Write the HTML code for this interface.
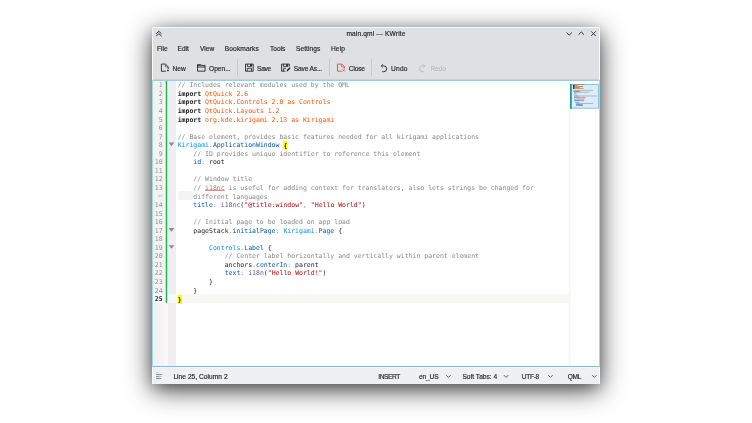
<!DOCTYPE html>
<html><head><meta charset="utf-8">
<style>
html,body{margin:0;padding:0;background:#fff;}
body{width:752px;height:423px;overflow:hidden;position:relative;font-family:"Liberation Sans",sans-serif;font-size:6.6px;color:#232629;}
#win{position:absolute;left:152px;top:27px;width:448px;height:357px;background:#dfe0e2;border-radius:2px 2px 0 0;
 box-shadow:0 6px 26px rgba(0,0,0,.74),0 3px 12px rgba(0,0,0,.18);will-change:transform;}
#hl{position:absolute;left:0;top:0;width:448px;height:53px;box-sizing:border-box;border:1px solid rgba(255,255,255,.8);border-bottom:none;border-radius:2px 2px 0 0;}
#hl2{position:absolute;left:0;top:340px;width:448px;height:17px;box-sizing:border-box;border:1px solid rgba(255,255,255,.7);border-top:none;border-bottom:none;}
#win .t{position:absolute;white-space:pre;line-height:10px;height:10px;-webkit-text-stroke:0.16px #232629;}
#title{left:0;width:448px;text-align:center;top:1.9px;letter-spacing:0.15px;}
.sep{position:absolute;width:1px;background:#c6c8ca;top:32px;height:17px;}
#ed{position:absolute;left:0;top:53px;width:448px;height:287px;background:#fff;overflow:hidden;}
.bt{position:absolute;left:0;top:0;width:448px;height:1px;background:#92cff3;}
.bb{position:absolute;left:0;top:286px;width:448px;height:1px;background:#72c1ec;}
.bl{position:absolute;left:0;top:0;width:1px;height:287px;background:#9bdcfa;}
.br{position:absolute;left:447px;top:0;width:1px;height:287px;background:#9bdcfa;}
#status{position:absolute;left:0;top:340px;width:448px;height:17px;background:#eff0f1;box-shadow:inset 0 1px 0 #f7f4f3;}
#tbl{position:absolute;left:0;top:52px;width:448px;height:1px;background:#cbcdd0;}
#gut{position:absolute;left:1px;top:1px;width:11px;height:285px;background:#f3f3f3;}
#strip{position:absolute;left:12px;top:1px;width:4px;height:285px;background:#f9f5f8;}
#g1{position:absolute;left:13px;top:1px;width:1px;height:222px;background:#bfe6cc;}
#g2{position:absolute;left:15px;top:1px;width:1px;height:222px;background:#c9ead4;}
#grn{position:absolute;left:14px;top:1px;width:1px;height:222px;background:#16b650;}
#fold{position:absolute;left:16px;top:1px;width:8px;height:285px;background:#efefef;}
#code{position:absolute;left:25.7px;top:1.4px;font-family:"DejaVu Sans Mono","Liberation Mono",monospace;font-size:6.517px;line-height:8.55px;white-space:pre;color:#1f1c1b;}
#code div{height:8.55px;}
#nums{position:absolute;left:1px;top:1.4px;width:9.6px;text-align:right;font-family:"DejaVu Sans Mono","Liberation Mono",monospace;font-size:6.5px;line-height:8.55px;color:#909090;}
#nums div{height:8.55px;}
.c{color:#898887}.k{font-weight:bold}.o{color:#ff5500}.lb{color:#0095ff}.db{color:#0057ae}.p{color:#ca60ca}.v{color:#644a9b}.s{color:#bf0303}
.y{background:#ffff00;font-weight:bold;padding:0.5px 0}
#cur{position:absolute;left:24px;top:214.3px;width:393px;height:8.5px;background:#f8f7f6;}
#curg{position:absolute;left:1px;top:214.3px;width:11px;height:8.5px;background:#fbfbfb;}
#curf{position:absolute;left:16px;top:214.3px;width:8px;height:8.5px;background:#f8f8f8;}
#wrapind{position:absolute;left:26px;top:111px;width:14.7px;height:8.6px;background:#f4f4f4;}
#split{position:absolute;left:417px;top:1px;width:1px;height:285px;background:#f4f4f4;border-right:1px solid #fafafa;}
</style></head><body>
<div id="win">
 <div class="t" id="title">main.qml — KWrite</div>
 <svg style="position:absolute;left:0;top:0" width="448" height="20" viewBox="0 0 448 20" fill="none" stroke="#2c2f32" stroke-width="0.9">
  <path d="M4.1 6.8 L6.8 4.3 L9.5 6.8 M4.1 9.1 L6.8 6.6 L9.5 9.1" stroke-width="1"/>
  <path d="M414.5 5.6 L417.2 8.2 L419.9 5.6" stroke-width="1"/>
  <path d="M426.6 7.6 L429.3 5 L432 7.6" stroke-width="1"/>
  <path d="M439.1 4.3 L443.8 9 M443.8 4.3 L439.1 9"/>
 </svg>
 <div class="t" style="left:5px;top:17.3px">File</div>
 <div class="t" style="left:25.5px;top:17.3px">Edit</div>
 <div class="t" style="left:48px;top:17.3px">View</div>
 <div class="t" style="left:72.8px;top:17.3px;letter-spacing:0.13px">Bookmarks</div>
 <div class="t" style="left:118px;top:17.3px">Tools</div>
 <div class="t" style="left:144px;top:17.3px;letter-spacing:0.05px">Settings</div>
 <div class="t" style="left:179px;top:17.3px;letter-spacing:0.1px">Help</div>


 <svg style="position:absolute;left:0;top:30px" width="448" height="22" viewBox="0 30 448 22" fill="none" stroke="#232629" stroke-width="0.9" stroke-linejoin="miter">
  <!-- new: 160.9-168.6, 63.6-71.7 => win 8.9-16.6, 36.6-44.7 -->
  <path d="M9.4 37.05 H13.4 L16.2 39.8 V42.2 M13.8 44.25 H9.4 V37.05" stroke-width="0.9"/>
  <path d="M13.3 37.2 V39.9 H16" stroke-width="0.55"/>
  <path d="M15.9 42.6 V44.4 M14.9 43.5 H16.8" stroke-width="0.75"/>
  <!-- open: 197.1-205.5, 64.2-71.6 => win 45.1-53.5, 37.2-44.6 -->
  <path d="M45.55 38 V44.15 H53.05 V38.45 H49.5 M45.5 40 H53.1" stroke-width="0.9"/>
  <path d="M45.1 37.2 H48.7 L49.6 38.1 L49.6 38.8 H45.1 Z" fill="#232629" stroke="none"/>
  <!-- save: 245-253.7, 63.6-71.7 => win 93-101.7, 36.6-44.7 -->
  <path d="M93.5 37.1 H101.2 V44.2 H93.5 Z"/>
  <path d="M95.4 37.1 V39.6 H99.6 V37.1" stroke-width="0.8"/>
  <path d="M98 37.2 H99.5 V39.3 H98 Z" fill="#232629" stroke="none"/>
  <path d="M95.3 44.2 V41.4 H99.5 V44.2" stroke-width="0.8"/>
  <!-- save as: 281.1-290.3 => win 129.1-138.3 -->
  <path d="M137.3 39.6 V37.1 H129.6 V44.2 H133.4"/>
  <path d="M131.5 37.1 V39.6 H135.7 V37.1" stroke-width="0.8"/>
  <path d="M134.1 37.2 H135.6 V39.3 H134.1 Z" fill="#232629" stroke="none"/>
  <path d="M131.4 44.2 V41.4 H134" stroke-width="0.8"/>
  <path d="M134.6 44.4 L135 42.8 L137.6 40.2 L138.6 41.2 L136 43.9 Z" fill="#232629" stroke="none"/>
  <!-- close: 337-344.8, 63.6-71.7 => win 185-192.8 -->
  <g stroke="#da4453">
  <path d="M192.3 41.5 V39.6 L189.8 37.1 H185.5 V44.2 H189.6"/>
  <path d="M189.6 37.3 V39.8 H192.2" stroke-width="0.7"/>
  <path d="M190.5 42.2 L192.7 44.4 M192.7 42.2 L190.5 44.4" stroke-width="0.8"/>
  </g>
  <!-- undo: 380.3-387, 64.4-72 => win 228.3-235, 37.4-45 -->
  <path d="M229.6 38.9 H231.8 A2.9 2.9 0 0 1 231.8 44.7 H230.2" stroke-width="0.9"/>
  <path d="M230.9 37.3 L229.2 38.9 L230.9 40.5" stroke-width="0.8"/>
  <!-- redo: 419.2-425.9 => win 267.2-273.9 -->
  <g stroke="#b4b6b8">
  <path d="M272.6 38.9 H270.4 A2.9 2.9 0 0 0 270.4 44.7 H272" stroke-width="0.8"/>
  <path d="M271.3 37.3 L273 38.9 L271.3 40.5" stroke-width="0.7"/>
  </g>
 </svg>
 <div class="t" style="left:20.6px;top:36.7px">New</div>
 <div class="t" style="left:57px;top:36.7px">Open...</div>
 <div class="sep" style="left:85px"></div>
 <div class="t" style="left:105.1px;top:36.7px;letter-spacing:-0.28px">Save</div>
 <div class="t" style="left:141.7px;top:36.7px;letter-spacing:-0.13px">Save As...</div>
 <div class="sep" style="left:176.5px"></div>
 <div class="t" style="left:196.8px;top:36.7px;letter-spacing:-0.16px">Close</div>
 <div class="sep" style="left:219px"></div>
 <div class="t" style="left:239px;top:36.7px;letter-spacing:0.25px">Undo</div>
 <div class="t" style="left:278.4px;top:36.7px;color:#b0b2b4;-webkit-text-stroke:0;letter-spacing:-0.1px">Redo</div>

 <div id="tbl"></div>
 <div id="ed">
  <div id="gut"></div><div id="strip"></div><div id="g1"></div><div id="g2"></div><div id="grn"></div><div id="fold"></div>
  <div id="cur"></div><div id="curg"></div><div id="curf"></div><div id="wrapind"></div><div id="split"></div>
  <div id="nums"><div>1</div><div>2</div><div>3</div><div>4</div><div>5</div><div>6</div><div>7</div><div>8</div><div>9</div><div>10</div><div>11</div><div>12</div><div>13</div><div>&nbsp;</div><div>14</div><div>15</div><div>16</div><div>17</div><div>18</div><div>19</div><div>20</div><div>21</div><div>22</div><div>23</div><div>24</div><div style="color:#1f1c1b;font-weight:bold">25</div></div>
  <div id="code"><div><span class="c">// Includes relevant modules used by the QML</span></div
><div><span class="k">import</span> <span class="o">QtQuick 2.6</span></div
><div><span class="k">import</span> <span class="o">QtQuick.Controls 2.0 as Controls</span></div
><div><span class="k">import</span> <span class="o">QtQuick.Layouts 1.2</span></div
><div><span class="k">import</span> <span class="o">org.kde.kirigami 2.13 as Kirigami</span></div
><div> </div
><div><span class="c">// Base element, provides basic features needed for all kirigami applications</span></div
><div><span class="lb">Kirigami</span><span class="p">.</span><span class="db">ApplicationWindow</span> <span class="y">{</span></div
><div>    <span class="c">// ID provides unique identifier to reference this element</span></div
><div>    <span class="db">id</span><span class="p">:</span> root</div
><div> </div
><div>    <span class="c">// Window title</span></div
><div>    <span class="c">// i18nc is useful for adding context for translators, also lets strings be changed for</span></div
><div>    <span class="c">different languages</span></div
><div>    <span class="db">title</span><span class="p">:</span> <span class="v">i18nc</span>(<span class="s">"@title:window"</span><span class="p">,</span> <span class="s">"Hello World"</span>)</div
><div> </div
><div>    <span class="c">// Initial page to be loaded on app load</span></div
><div>    pageStack<span class="p">.</span><span class="db">initialPage</span><span class="p">:</span> <span class="lb">Kirigami</span><span class="p">.</span><span class="db">Page</span> {</div
><div> </div
><div>        <span class="lb">Controls</span><span class="p">.</span><span class="db">Label</span> {</div
><div>            <span class="c">// Center label horizontally and vertically within parent element</span></div
><div>            anchors<span class="p">.</span><span class="db">centerIn</span><span class="p">:</span> parent</div
><div>            <span class="db">text</span><span class="p">:</span> <span class="v">i18n</span>(<span class="s">"Hello World!"</span>)</div
><div>        }</div
><div>    }</div
><div><span class="y">}</span></div></div>

  <svg style="position:absolute;left:0;top:0" width="448" height="287" viewBox="0 0 448 287">
   <g id="mm"><rect x="418" y="4" width="29" height="24.7" fill="#dcedfa"/><rect x="418.5" y="4.5" width="28" height="23.7" fill="none" stroke="#7fc6ef" stroke-width="1"/><rect x="418" y="4" width="1.8" height="24.7" fill="#2a9a8e"/><rect x="421.00" y="4.22" width="11.53" height="0.70" fill="#6f6e6d" fill-opacity="0.60"/><rect x="421.00" y="5.05" width="1.57" height="0.95" fill="#1f1c1b" fill-opacity="0.95"/><rect x="422.83" y="5.05" width="2.88" height="0.95" fill="#ff5500" fill-opacity="0.75"/><rect x="421.00" y="6.00" width="1.57" height="0.95" fill="#1f1c1b" fill-opacity="0.95"/><rect x="422.83" y="6.00" width="8.38" height="0.95" fill="#ff5500" fill-opacity="0.75"/><rect x="421.00" y="6.95" width="1.57" height="0.95" fill="#1f1c1b" fill-opacity="0.95"/><rect x="422.83" y="6.95" width="4.98" height="0.95" fill="#ff5500" fill-opacity="0.75"/><rect x="421.00" y="7.90" width="1.57" height="0.95" fill="#1f1c1b" fill-opacity="0.95"/><rect x="422.83" y="7.90" width="8.65" height="0.95" fill="#ff5500" fill-opacity="0.75"/><rect x="421.00" y="9.92" width="20.17" height="0.70" fill="#6f6e6d" fill-opacity="0.60"/><rect x="421.00" y="10.88" width="2.36" height="0.70" fill="#0095ff" fill-opacity="0.80"/><rect x="423.36" y="10.88" width="4.45" height="0.70" fill="#0057ae" fill-opacity="0.80"/><rect x="428.07" y="10.88" width="0.26" height="0.70" fill="#c8c800" fill-opacity="0.90"/><rect x="422.05" y="11.82" width="15.20" height="0.70" fill="#6f6e6d" fill-opacity="0.60"/><rect x="422.05" y="12.77" width="0.79" height="0.70" fill="#0057ae" fill-opacity="0.80"/><rect x="423.10" y="12.77" width="1.05" height="0.70" fill="#1f1c1b" fill-opacity="0.60"/><rect x="422.05" y="14.67" width="3.93" height="0.70" fill="#6f6e6d" fill-opacity="0.60"/><rect x="422.05" y="15.62" width="22.79" height="0.70" fill="#6f6e6d" fill-opacity="0.60"/><rect x="422.05" y="16.57" width="4.98" height="0.70" fill="#6f6e6d" fill-opacity="0.60"/><rect x="422.05" y="17.52" width="1.57" height="0.70" fill="#0057ae" fill-opacity="0.80"/><rect x="423.88" y="17.52" width="1.57" height="0.70" fill="#644a9b" fill-opacity="0.70"/><rect x="425.45" y="17.52" width="4.19" height="0.70" fill="#bf0303" fill-opacity="0.75"/><rect x="429.91" y="17.52" width="3.41" height="0.70" fill="#bf0303" fill-opacity="0.75"/><rect x="433.31" y="17.52" width="0.26" height="0.70" fill="#1f1c1b" fill-opacity="0.60"/><rect x="422.05" y="19.42" width="10.48" height="0.70" fill="#6f6e6d" fill-opacity="0.60"/><rect x="422.05" y="20.38" width="2.62" height="0.70" fill="#1f1c1b" fill-opacity="0.60"/><rect x="424.67" y="20.38" width="3.14" height="0.70" fill="#0057ae" fill-opacity="0.80"/><rect x="428.07" y="20.38" width="2.36" height="0.70" fill="#0095ff" fill-opacity="0.80"/><rect x="430.43" y="20.38" width="1.05" height="0.70" fill="#0057ae" fill-opacity="0.80"/><rect x="431.74" y="20.38" width="0.26" height="0.70" fill="#1f1c1b" fill-opacity="0.60"/><rect x="423.10" y="22.27" width="2.36" height="0.70" fill="#0095ff" fill-opacity="0.80"/><rect x="425.45" y="22.27" width="1.31" height="0.70" fill="#0057ae" fill-opacity="0.80"/><rect x="427.03" y="22.27" width="0.26" height="0.70" fill="#1f1c1b" fill-opacity="0.60"/><rect x="424.14" y="23.23" width="17.03" height="0.70" fill="#6f6e6d" fill-opacity="0.60"/><rect x="424.14" y="24.17" width="2.10" height="0.70" fill="#1f1c1b" fill-opacity="0.60"/><rect x="426.24" y="24.17" width="2.36" height="0.70" fill="#0057ae" fill-opacity="0.80"/><rect x="428.86" y="24.17" width="1.57" height="0.70" fill="#1f1c1b" fill-opacity="0.60"/><rect x="424.14" y="25.12" width="1.31" height="0.70" fill="#0057ae" fill-opacity="0.80"/><rect x="425.72" y="25.12" width="1.31" height="0.70" fill="#644a9b" fill-opacity="0.70"/><rect x="427.03" y="25.12" width="3.67" height="0.70" fill="#bf0303" fill-opacity="0.75"/><rect x="430.69" y="25.12" width="0.26" height="0.70" fill="#1f1c1b" fill-opacity="0.60"/><rect x="423.10" y="26.07" width="0.26" height="0.70" fill="#1f1c1b" fill-opacity="0.60"/><rect x="422.05" y="27.02" width="0.26" height="0.70" fill="#1f1c1b" fill-opacity="0.60"/><rect x="421.00" y="27.98" width="0.26" height="0.70" fill="#c8c800" fill-opacity="0.90"/></g>
   <g fill="#8b8b8b"><path d="M16.70 62.55 H22.30 L19.50 66.25 Z"/><path d="M16.70 148.05 H22.30 L19.50 151.75 Z"/><path d="M16.70 165.15 H22.30 L19.50 168.85 Z"/></g>
   <path d="M9.8 114.7 v1.4 h-3 M7.7 115.2 l-1 0.9 l1 0.9" fill="none" stroke="#a0a0a0" stroke-width="0.55"/><path d="M53.1 110.35 H72.7" stroke="#e23c3c" stroke-width="0.75" fill="none"/>
  </svg>
  <div class="bt"></div><div class="bb"></div><div class="bl"></div><div class="br"></div>
 </div>
 <div id="status">

  <svg style="position:absolute;left:0;top:0" width="448" height="17" viewBox="0 0 448 17" fill="none">
   <g stroke-width="0.8">
   <path d="M4 5.7 H7" stroke="#b9c0c9"/>
   <path d="M4 7.6 H10.1" stroke="#64748b"/>
   <path d="M4 9.6 H7" stroke="#64748b"/><path d="M7 9.6 H9.9" stroke="#a9b2bd"/>
   <path d="M4 11.5 H9" stroke="#64748b"/>
   </g>
   <g stroke="#3f4245" stroke-width="0.85">
   <path d="M294.1 8.1 L296.4 10.4 L298.7 8.1"/>
   <path d="M351.8 8.1 L354.1 10.4 L356.4 8.1"/>
   <path d="M396.1 8.1 L398.4 10.4 L400.7 8.1"/>
   <path d="M440 8.1 L442.3 10.4 L444.6 8.1"/>
   </g>
  </svg>
  <div class="t" style="left:21.4px;top:4.7px;letter-spacing:0.04px">Line 25, Column 2</div>
  <div class="t" style="left:226.3px;top:4.7px;letter-spacing:-0.43px">INSERT</div>
  <div class="t" style="left:267.1px;top:4.7px;letter-spacing:-0.18px">en_US</div>
  <div class="t" style="left:310.4px;top:4.7px">Soft Tabs: 4</div>
  <div class="t" style="left:369.8px;top:4.7px;letter-spacing:-0.3px">UTF-8</div>
  <div class="t" style="left:415.7px;top:4.7px;letter-spacing:-0.33px">QML</div>
 </div>
 <div id="hl"></div><div id="hl2"></div>
</div>
</body></html>
